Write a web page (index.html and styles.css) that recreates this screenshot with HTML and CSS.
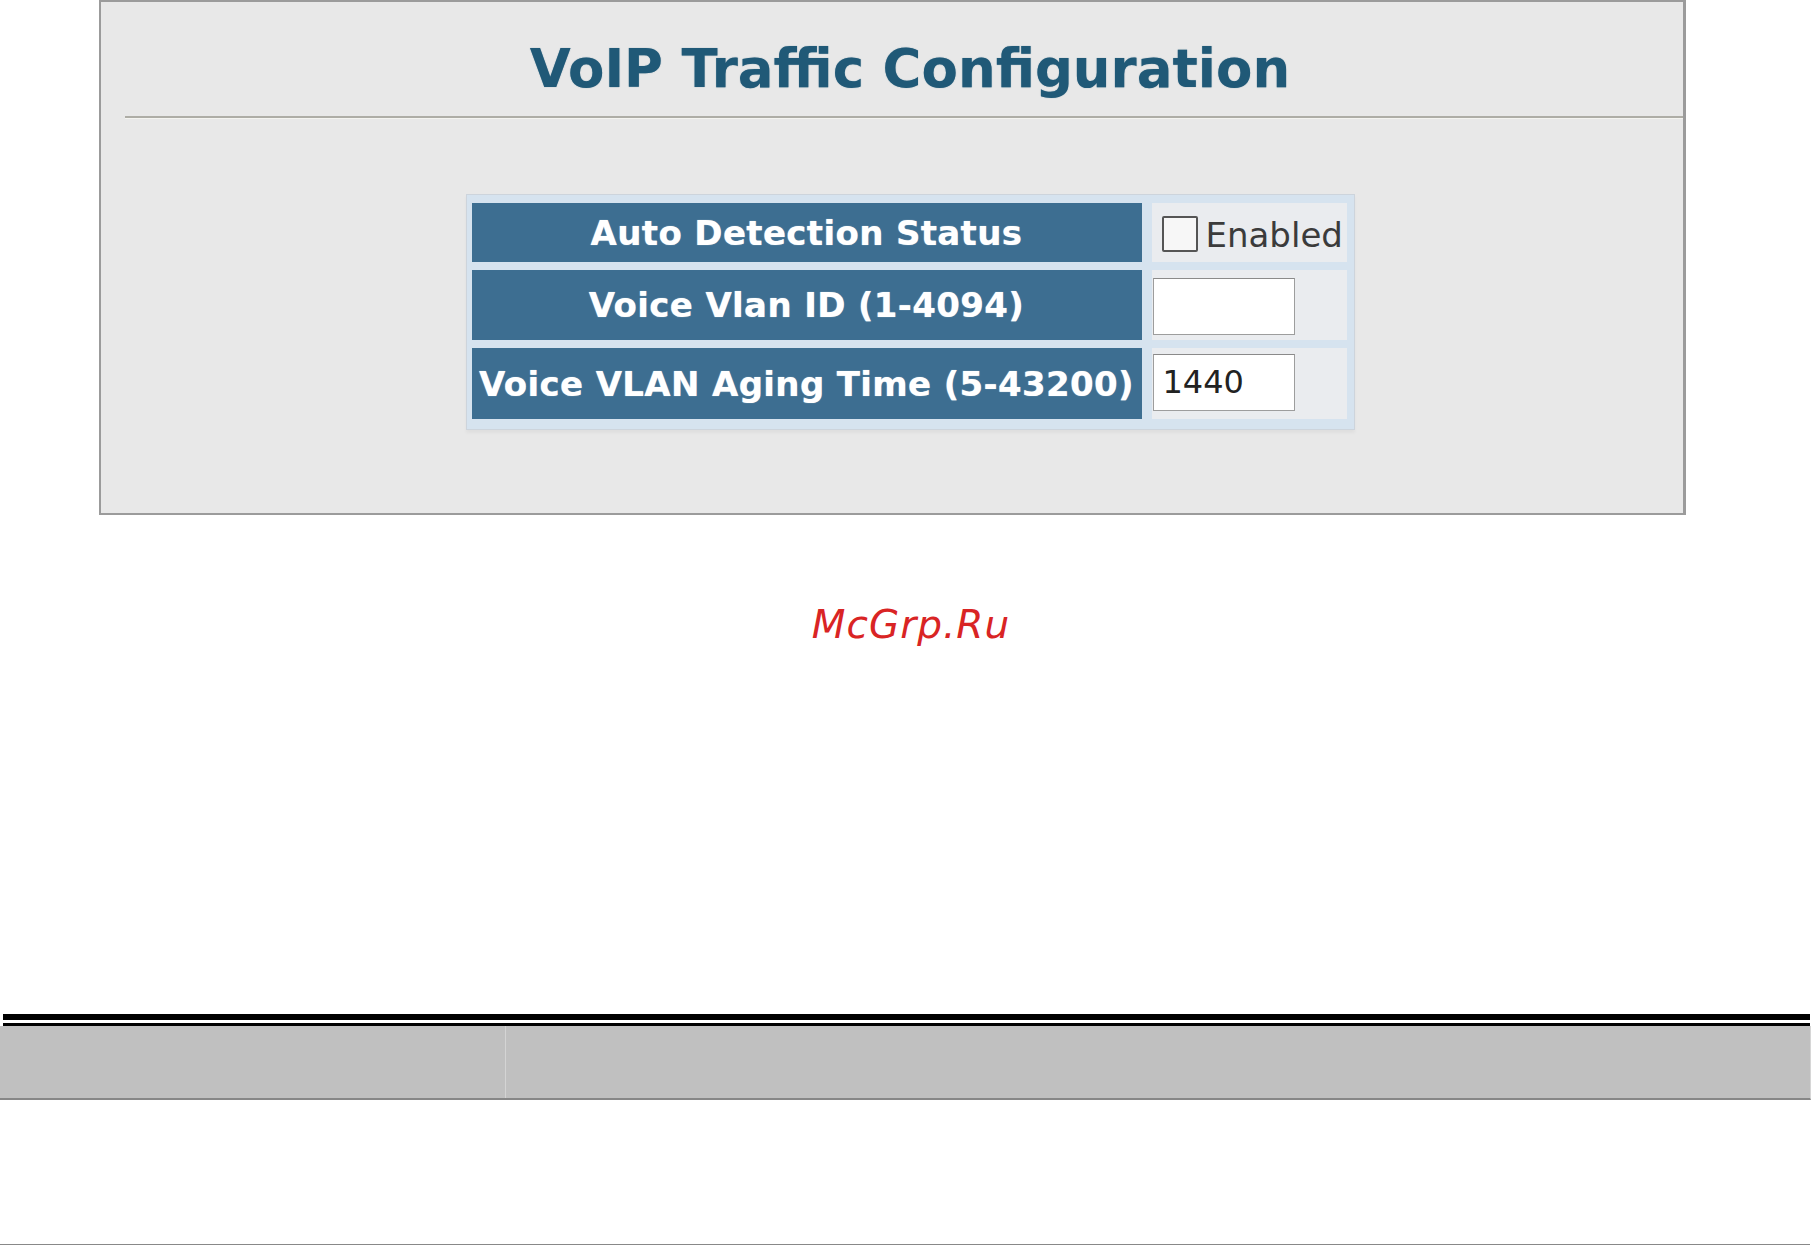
FILE: index.html
```html
<!DOCTYPE html>
<html lang="en">
<head>
<meta charset="utf-8">
<title>VoIP Traffic Configuration</title>
<link rel="stylesheet" href="styles.css">
</head>
<body>
<div class="panel">
  <h1 class="title">VoIP Traffic Configuration</h1>
  <div class="separator"></div>
  <div class="table-wrap">
    <div class="config">
      <div class="head">Auto Detection Status</div>
      <div class="value value-check">
        <span class="checkbox"></span>
        <span class="check-label">Enabled</span>
      </div>
      <div class="head">Voice Vlan ID (1-4094)</div>
      <div class="value value-input1">
        <div class="field"></div>
      </div>
      <div class="head">Voice VLAN Aging Time (5-43200)</div>
      <div class="value value-input2">
        <div class="field">1440</div>
      </div>
    </div>
  </div>
</div>

<div class="watermark">McGrp.Ru</div>

<div class="doc-table">
  <div class="rule-thick"></div>
  <div class="rule-gap"></div>
  <div class="rule-thin"></div>
  <div class="doc-head">
    <div class="doc-cell doc-cell-left"></div>
    <div class="doc-cell"></div>
  </div>
</div>

<div class="page-bottom"></div>
</body>
</html>
```

FILE: styles.css
```css
html, body {
  margin: 0;
  padding: 0;
  background: #ffffff;
  overflow: hidden;
}

body {
  width: 1812px;
  height: 1245px;
  font-family: "DejaVu Sans", Verdana, sans-serif;
}

.panel {
  box-sizing: border-box;
  margin-left: 99px;
  width: 1587px;
  height: 515px;
  background: #e8e8e8;
  border: 2px solid #9b9b9b;
  border-right-width: 3px;
}

.title {
  margin: 0;
  padding: 36px 0 0 36px;
  text-align: center;
  font-family: "DejaVu Sans", Verdana, sans-serif;
  font-weight: bold;
  font-size: 53px;
  line-height: 62px;
  color: #205977;
  text-shadow: 0 0 1px rgba(33, 90, 120, 0.6);
}

.separator {
  margin: 16px 0 0 24px;
  border-top: 2px solid #aeada6;
  border-bottom: 1px solid #f4f4f0;
}

.table-wrap {
  display: flex;
  justify-content: center;
  padding-left: 36px;
  margin-top: 75px;
}

.config {
  display: grid;
  grid-template-columns: 670px 195px;
  grid-template-rows: 59px 70px 71px;
  column-gap: 10px;
  row-gap: 8px;
  padding: 8px 7px 10px 5px;
  background: #d6e3ef;
  border: 1px solid #cdd4dc;
  box-shadow: 0 3px 3px rgba(0, 0, 0, 0.04);
}

.head {
  display: flex;
  align-items: center;
  justify-content: center;
  background: #3d6e91;
  color: #ffffff;
  font-weight: bold;
  font-size: 34px;
  letter-spacing: 0.35px;
  white-space: nowrap;
  text-shadow: 0 0 1px rgba(255, 255, 255, 0.7);
}

.value {
  background: #eaecef;
  display: flex;
}

.value-check {
  align-items: center;
  padding-left: 10px;
  gap: 8px;
}

.checkbox {
  box-sizing: border-box;
  width: 36px;
  height: 36px;
  border: 2px solid #555555;
  border-radius: 2px;
  background: #f7f7f7;
  margin-top: 2px;
}

.check-label {
  font-size: 34px;
  color: #3b3b3b;
  white-space: nowrap;
  margin-top: 4px;
}

.value-input1 {
  align-items: flex-start;
  padding: 8px 0 0 1px;
}

.value-input2 {
  align-items: flex-start;
  padding: 6px 0 0 1px;
}

.field {
  box-sizing: border-box;
  width: 142px;
  height: 57px;
  background: #ffffff;
  border: 1px solid #9d9d9d;
  border-top-color: #8a8a8a;
  padding-left: 9px;
  font-size: 32px;
  line-height: 55px;
  color: #222222;
}

.watermark {
  margin-top: 86px;
  padding-left: 10px;
  text-align: center;
  font-family: "DejaVu Sans", sans-serif;
  font-style: italic;
  font-size: 39px;
  line-height: 47px;
  letter-spacing: 1px;
  color: #d92424;
}

.doc-table {
  margin-top: 366px;
}

.rule-thick {
  height: 6px;
  margin: 0 2px 0 3px;
  background: #000000;
}

.rule-gap {
  height: 3px;
}

.rule-thin {
  height: 3px;
  margin: 0 2px 0 3px;
  background: #000000;
}

.doc-head {
  display: grid;
  grid-template-columns: 506px 1fr;
  height: 72px;
  margin-right: 1px;
  background: #c0c0c0;
  border-bottom: 2px solid #878787;
  border-right: 1px solid #d6d6d6;
}

.doc-cell-left {
  border-right: 1px solid #d4d4d4;
}

.page-bottom {
  margin-top: 144px;
  height: 2px;
  margin-right: 2px;
  background: #888888;
}
```
